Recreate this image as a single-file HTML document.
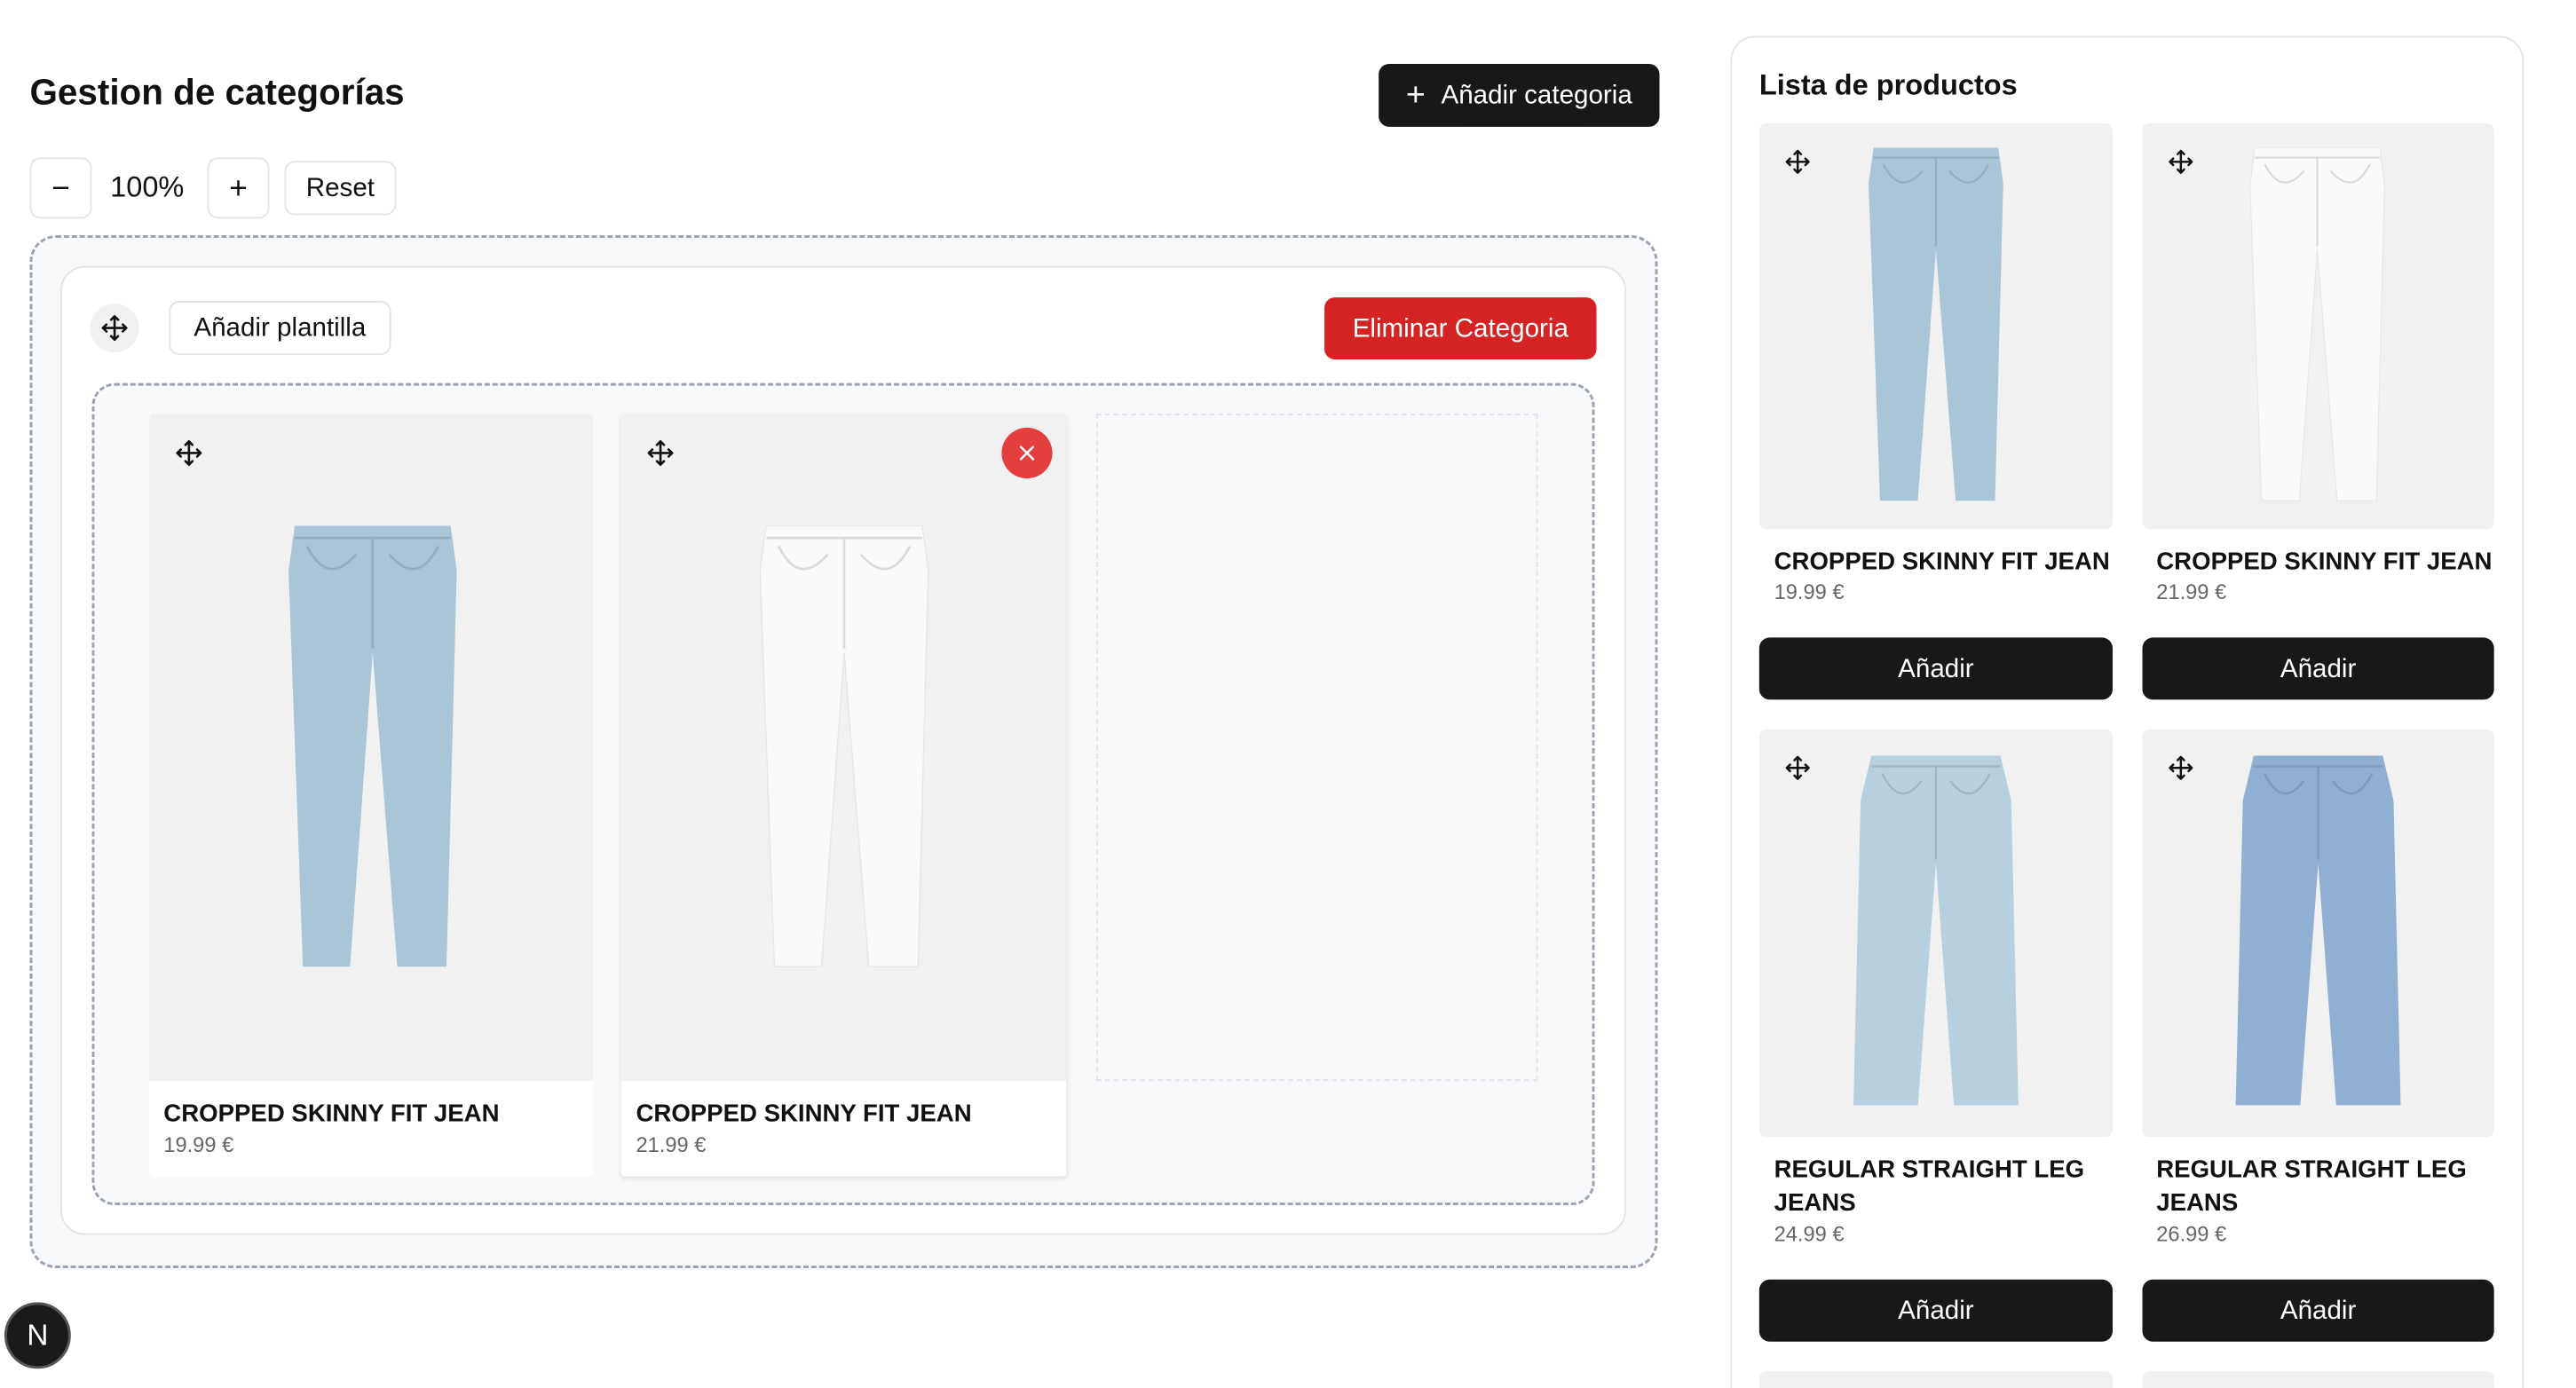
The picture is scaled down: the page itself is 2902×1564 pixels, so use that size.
<!DOCTYPE html>
<html><head><meta charset="utf-8">
<style>
*{box-sizing:border-box;margin:0;padding:0}
html,body{width:2902px;height:1564px;overflow:hidden;background:#fff}
body{font-family:"Liberation Sans",sans-serif;color:#111;position:relative}
#w{position:absolute;left:0;top:0;width:2950px;height:1600px;transform:scale(0.9855);transform-origin:0 0}
.abs{position:absolute}
.btnw{position:absolute;background:#fff;border:2px solid #e4e4e7;border-radius:12px;display:flex;align-items:center;justify-content:center;font-size:30px;color:#111}
.dark{position:absolute;background:#18181b;color:#fff;border-radius:12px;display:flex;align-items:center;justify-content:center;font-size:30px;font-weight:500}
.mv{position:absolute;width:56px;height:56px;border-radius:50%;background:#f1f1f2;display:flex;align-items:center;justify-content:center}
.img{position:absolute;background:#f1f1f1;border-radius:8px;overflow:hidden}
.t{position:absolute;font-size:28px;font-weight:700;color:#111;line-height:38px}
.p{position:absolute;font-size:24px;color:#666}
</style></head><body>
<svg width="0" height="0" style="position:absolute">
<defs>
<symbol id="mvi" viewBox="0 0 24 24"><g fill="none" stroke="#111" stroke-width="2" stroke-linecap="round" stroke-linejoin="round"><path d="M12 2v20M2 12h20M9 5l3-3 3 3M9 19l3 3 3-3M5 9l-3 3 3 3M19 9l3 3-3 3"/></g></symbol>
<symbol id="skinny" viewBox="0 0 100 220"><path d="M12 0H88L91 22L86 215H62L50 62L39 215H16L9 22Z"/><path d="M12 6H88M50 6V60M18 10Q28 30 42 14M82 10Q72 30 58 14" fill="none" stroke="rgba(0,0,0,.12)" stroke-width="1.2"/></symbol>
<symbol id="straight" viewBox="0 0 100 200"><path d="M14 0H86L92 25L96 195H60L50 60L40 195H4L8 25Z"/><path d="M14 6H86M50 6V58M20 10Q30 30 42 14M80 10Q70 30 58 14" fill="none" stroke="rgba(0,0,0,.12)" stroke-width="1.2"/></symbol>
</defs></svg>
<div id="w">
<div class="abs" style="left:34px;top:82px;font-size:41px;font-weight:700;">Gestion de categorías</div>
<div class="dark" style="left:1576px;top:73px;width:321px;height:72px;"><span style="font-size:38px;font-weight:300;margin-right:18px">+</span>Añadir categoria</div>

<div class="btnw" style="left:34px;top:180px;width:71px;height:70px;font-size:36px">−</div>
<div class="abs" style="left:126px;top:195px;font-size:33px">100%</div>
<div class="btnw" style="left:237px;top:180px;width:71px;height:70px;font-size:36px">+</div>
<div class="btnw" style="left:325px;top:184px;width:128px;height:62px;">Reset</div>

<div class="abs" style="left:34px;top:269px;width:1861px;height:1181px;border:3px dashed #9ca3af;border-radius:30px;background:#f8f9fb"></div>
<div class="abs" style="left:69px;top:304px;width:1790px;height:1108px;border:2px solid #e5e5e5;border-radius:28px;background:#fff"></div>
<div class="mv" style="left:103px;top:347px"><svg width="32" height="32"><use href="#mvi"/></svg></div>
<div class="btnw" style="left:193px;top:344px;width:254px;height:62px;">Añadir plantilla</div>
<div class="abs" style="left:1514px;top:340px;width:311px;height:71px;background:#d42323;color:#fff;border-radius:12px;display:flex;align-items:center;justify-content:center;font-size:30px;font-weight:500">Eliminar Categoria</div>

<div class="abs" style="left:105px;top:438px;width:1718px;height:940px;border:3px dashed #9ca3af;border-radius:26px;background:#f8f9fb"></div>

<div class="abs" style="left:171px;top:473px;width:507px;height:872px;background:#fff;border-radius:4px"></div>
<div class="img" style="left:171px;top:473px;width:507px;height:763px;border-radius:4px 4px 0 0">
<svg class="abs" style="left:135px;top:128px" width="240" height="516" fill="#a9c6d8"><use href="#skinny"/></svg>
</div>
<div class="mv" style="left:188px;top:490px"><svg width="32" height="32"><use href="#mvi"/></svg></div>
<div class="t" style="left:187px;top:1254px">CROPPED SKINNY FIT JEAN</div>
<div class="p" style="left:187px;top:1296px">19.99 €</div>

<div class="abs" style="left:710px;top:473px;width:509px;height:872px;background:#fff;border-radius:4px;box-shadow:0 2px 6px rgba(0,0,0,.12)"></div>
<div class="img" style="left:710px;top:473px;width:509px;height:763px;border-radius:4px 4px 0 0">
<svg class="abs" style="left:130px;top:128px" width="250" height="516" fill="#fafafa" stroke="#e6e6e6" stroke-width=".6"><use href="#skinny"/></svg>
</div>
<div class="mv" style="left:727px;top:490px"><svg width="32" height="32"><use href="#mvi"/></svg></div>
<div class="abs" style="left:1145px;top:489px;width:58px;height:58px;border-radius:50%;background:#e53e3e;display:flex;align-items:center;justify-content:center"><svg width="24" height="24" viewBox="0 0 24 24"><path d="M5 5L19 19M19 5L5 19" stroke="#fff" stroke-width="2.5" stroke-linecap="round"/></svg></div>
<div class="t" style="left:727px;top:1254px">CROPPED SKINNY FIT JEAN</div>
<div class="p" style="left:727px;top:1296px">21.99 €</div>

<div class="abs" style="left:1253px;top:473px;width:505px;height:763px;border:2px dashed #e2e4e8;background:#f8f9fb"></div>

<div class="abs" style="left:5px;top:1489px;width:76px;height:76px;border-radius:50%;background:#1a1a1a;border:3px solid #555;color:#fff;font-size:34px;display:flex;align-items:center;justify-content:center">N</div>

<div class="abs" style="left:1978px;top:41px;width:907px;height:1580px;border:2px solid #e5e5e5;border-radius:28px;background:#fff"></div>
<div class="abs" style="left:2011px;top:78px;font-size:33px;font-weight:700">Lista de productos</div>

<div class="img" style="left:2011px;top:141px;width:404px;height:464px"><svg class="abs" style="left:106px;top:28px" width="192" height="413" fill="#a9c6d8"><use href="#skinny"/></svg></div>
<div class="mv" style="left:2027px;top:157px"><svg width="30" height="30"><use href="#mvi"/></svg></div>
<div class="t" style="left:2028px;top:623px">CROPPED SKINNY FIT JEAN</div>
<div class="p" style="left:2028px;top:664px">19.99 €</div>
<div class="dark" style="left:2011px;top:729px;width:404px;height:71px">Añadir</div>

<div class="img" style="left:2449px;top:141px;width:402px;height:464px"><svg class="abs" style="left:100px;top:28px" width="200" height="413" fill="#fafafa" stroke="#e6e6e6" stroke-width=".6"><use href="#skinny"/></svg></div>
<div class="mv" style="left:2465px;top:157px"><svg width="30" height="30"><use href="#mvi"/></svg></div>
<div class="t" style="left:2465px;top:623px">CROPPED SKINNY FIT JEAN</div>
<div class="p" style="left:2465px;top:664px">21.99 €</div>
<div class="dark" style="left:2449px;top:729px;width:402px;height:71px">Añadir</div>

<div class="img" style="left:2011px;top:834px;width:404px;height:466px"><svg class="abs" style="left:82px;top:30px" width="240" height="410" fill="#b6d0e0"><use href="#straight"/></svg></div>
<div class="mv" style="left:2027px;top:850px"><svg width="30" height="30"><use href="#mvi"/></svg></div>
<div class="t" style="left:2028px;top:1318px">REGULAR STRAIGHT LEG<br>JEANS</div>
<div class="p" style="left:2028px;top:1398px">24.99 €</div>
<div class="dark" style="left:2011px;top:1463px;width:404px;height:71px">Añadir</div>

<div class="img" style="left:2449px;top:834px;width:402px;height:466px"><svg class="abs" style="left:86px;top:30px" width="230" height="410" fill="#8fb0d2"><use href="#straight"/></svg></div>
<div class="mv" style="left:2465px;top:850px"><svg width="30" height="30"><use href="#mvi"/></svg></div>
<div class="t" style="left:2465px;top:1318px">REGULAR STRAIGHT LEG<br>JEANS</div>
<div class="p" style="left:2465px;top:1398px">26.99 €</div>
<div class="dark" style="left:2449px;top:1463px;width:402px;height:71px">Añadir</div>

<div class="img" style="left:2011px;top:1568px;width:404px;height:40px"></div>
<div class="img" style="left:2449px;top:1568px;width:402px;height:40px"></div>
</div>
</body></html>
